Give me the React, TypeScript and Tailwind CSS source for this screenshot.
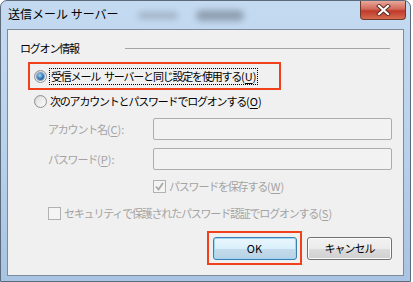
import React from 'react';

const font = "font-['Meiryo_UI','Noto_Sans_CJK_JP',sans-serif]";

function Radio({ checked }: { checked?: boolean }) {
  return (
    <span className="flex h-[13px] w-[13px] shrink-0 items-center justify-center rounded-full border border-[#929292] bg-gradient-to-br from-[#cfcfcf] to-[#fbfbfb]">
      {checked ? (
        <span className="h-[7px] w-[7px] rounded-full bg-[radial-gradient(circle_at_40%_35%,#a8d6f7,#2f73b3_55%,#123f70)] ring-1 ring-[#7da2c4]" />
      ) : (
        <span className="h-[9px] w-[9px] rounded-full bg-gradient-to-br from-[#e0e0e0] to-[#f9f9f9]" />
      )}
    </span>
  );
}

function Check({ checked }: { checked?: boolean }) {
  return (
    <span className="flex h-[13px] w-[13px] shrink-0 items-center justify-center border border-[#b1b1b1] bg-[#f4f4f4]">
      {checked && (
        <svg width="9" height="9" viewBox="0 0 9 9">
          <path d="M1 4.5 L3.5 7.5 L8 1" fill="none" stroke="#a9a9a9" strokeWidth="1.8" />
        </svg>
      )}
    </span>
  );
}

function Key({ k }: { k: string }) {
  return (
    <span className="tracking-normal">
      (<span className="underline underline-offset-2">{k}</span>)
    </span>
  );
}

export default function App() {
  return (
    <div className={`${font} h-[282px] w-[413px] overflow-hidden bg-white text-[11px] leading-[16px] tracking-[-1.2px] text-black`}>
      <div className="flex h-[282px] w-[411px] flex-col rounded-t-[7px] border border-[#5b6b7c] bg-gradient-to-b from-[#c4daf1] via-[#b9d2ec] to-[#a8c4e2]">
        {/* title bar */}
        <div className="flex h-[28px] shrink-0 items-start">
          <div className="mt-[5px] ml-[7px] w-[118px] text-[12px] leading-[16px] tracking-normal whitespace-nowrap text-black">送信メール サーバー</div>
          <div className="mt-[11px] ml-[12px] h-[7px] w-[40px] rounded-full bg-[#8a98a8] opacity-60 blur-[3px]" />
          <div className="mt-[9px] ml-[18px] h-[11px] w-[48px] rounded-full bg-[#6d7a88] opacity-60 blur-[3px]" />
          <div className="flex-1" />
          <div className="mr-[4px] flex h-[19px] w-[46px] items-center justify-center rounded-b-[4px] border border-t-0 border-[#6e3a30] bg-[linear-gradient(#e9a89a,#d0695a_45%,#c0392b_55%,#d66b4f)]">
            <svg width="15" height="12" viewBox="0 0 15 12">
              <path d="M3 2 L12 10 M12 2 L3 10" stroke="#5a2a22" strokeWidth="4" strokeLinecap="square" />
              <path d="M3 2 L12 10 M12 2 L3 10" stroke="#ffffff" strokeWidth="2.2" strokeLinecap="square" />
            </svg>
          </div>
        </div>

        {/* client area */}
        <div className="mx-[6px] flex h-[247px] shrink-0 flex-col border border-[#7d8b9b] bg-[#f0f0f0] whitespace-nowrap">
          <div className="mt-[10px] flex h-[16px] items-center">
            <span className="ml-[12px] w-[105px]">ログオン情報</span>
            <span className="h-px w-[265px] bg-[#a5a5a5]" />
          </div>

          <div className="mt-[6px] ml-[20px] flex h-[28px] w-[253px] items-center border-2 border-[#f0401c] pl-[4px]">
            <Radio checked />
            <span className="ml-[2px] border border-dotted border-black px-[1px] leading-[15px]">
              受信メール<span className="ml-[4px]">サーバーと同じ設定を使用する</span><Key k="U" />
            </span>
          </div>

          <div className="mt-[3px] ml-[26px] flex h-[16px] items-center">
            <Radio />
            <span className="ml-[3px]">
              次のアカウントとパスワードでログオンする<Key k="O" />
            </span>
          </div>

          <div className="mt-[9px] ml-[40px] flex h-[22px] items-center">
            <span className="w-[105px] text-[#a3a3a3]">
              アカウント名<Key k="C" />:
            </span>
            <span className="h-[22px] w-[239px] rounded-[2px] border border-[#adadad] bg-[#f2f2f2]" />
          </div>

          <div className="mt-[8px] ml-[40px] flex h-[22px] items-center">
            <span className="w-[105px] text-[#a3a3a3]">
              パスワード<Key k="P" />:
            </span>
            <span className="h-[22px] w-[239px] rounded-[2px] border border-[#adadad] bg-[#f2f2f2]" />
          </div>

          <div className="mt-[8px] ml-[145px] flex h-[16px] items-center">
            <Check checked />
            <span className="ml-[3px] text-[#a3a3a3]">
              パスワードを保存する<Key k="W" />
            </span>
          </div>

          <div className="mt-[11px] ml-[40px] flex h-[16px] items-center">
            <Check />
            <span className="ml-[3px] text-[#a3a3a3]">
              セキュリティで保護されたパスワード認証でログオンする<Key k="S" />
            </span>
          </div>

          <div className="mt-[10px] ml-[199px] flex items-center tracking-normal">
            <div className="flex h-[34px] w-[95px] items-center justify-center border-2 border-[#f0401c]">
              <button className="h-[23px] w-[84px] rounded-[3px] border border-[#3c7fb1] bg-[linear-gradient(#eaf6fd,#d9f0fc_50%,#c4dcec_50%,#b8d3e6)] shadow-[inset_0_0_0_1px_#9fd6f3]">
                OK
              </button>
            </div>
            <button className="ml-[5px] h-[23px] w-[85px] rounded-[3px] border border-[#707070] bg-[linear-gradient(#f2f2f2,#ebebeb_50%,#dddddd_50%,#cfcfcf)] shadow-[inset_0_0_0_1px_#fcfcfc] tracking-[-1px]">
              キャンセル
            </button>
          </div>
        </div>
      </div>
    </div>
  );
}
